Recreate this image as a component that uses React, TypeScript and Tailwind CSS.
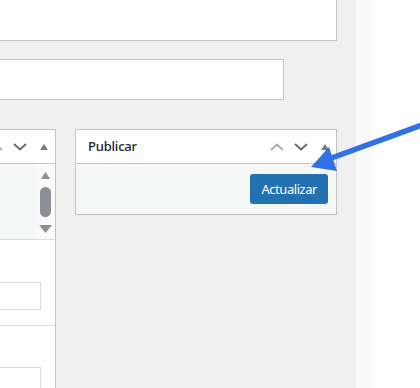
import React from 'react'

const ChevronUp = ({ className }: { className?: string }) => (
  <svg width="14" height="8" viewBox="0 0 14 8" className={className}>
    <polyline points="1,7 7,1.5 13,7" fill="none" stroke="currentColor" strokeWidth="1.8" />
  </svg>
)

const ChevronDown = ({ className }: { className?: string }) => (
  <svg width="14" height="8" viewBox="0 0 14 8" className={className}>
    <polyline points="1,1 7,6.5 13,1" fill="none" stroke="currentColor" strokeWidth="1.8" />
  </svg>
)

const Triangle = ({ className }: { className?: string }) => (
  <svg width="8" height="6" viewBox="0 0 8 6" className={className}>
    <polygon points="4,0 8,6 0,6" fill="currentColor" />
  </svg>
)

// the up / down / toggle buttons on the right of a postbox header
const HandleActions = () => (
  <div className="flex items-center shrink-0 pr-[7px]">
    <ChevronUp className="text-[#a7aaad]" />
    <ChevronDown className="ml-[10px] text-[#646970]" />
    <Triangle className="ml-[13px] text-[#787c82]" />
  </div>
)

export default function App() {
  return (
    <div className="relative w-[420px] h-[388px] overflow-hidden flex font-['Noto_Sans',sans-serif] text-[#1d2327]">
      <div className="w-[356px] shrink-0 bg-[#f0f0f0] flex flex-col">
        {/* editor body */}
        <div className="w-[337px] h-[41px] shrink-0 bg-white border-r border-b border-[#c3c4c7]" />
        {/* permalink input */}
        <div className="mt-[18px] w-[284px] h-[41px] shrink-0 bg-white border-y border-r border-[#c3c4c7]" />

        <div className="mt-[29px] flex items-start gap-[19px] flex-1 min-h-0">
          {/* left postbox, cut off */}
          <div className="w-[56px] h-full shrink-0 overflow-hidden bg-white border-t border-r border-[#c3c4c7] flex flex-col">
            <div className="h-[34px] shrink-0 flex items-center justify-end border-b border-[#c3c4c7]">
              <HandleActions />
            </div>
            <div className="h-[76px] shrink-0 flex border-b border-[#dcdcde] bg-[#f6f7f7]">
              <div className="flex-1" />
              <div className="w-[19px] bg-[#fafafa] flex flex-col items-center pt-[8px]">
                <Triangle className="w-[13px] h-[7px] text-[#8c8f94]" />
                <div className="mt-[8px] w-[11px] h-[30px] rounded-full bg-[#8c8f94]" />
                <svg width="13" height="8" viewBox="0 0 13 8" className="mt-[8px] text-[#8c8f94]">
                  <polygon points="0,0 13,0 6.5,8" fill="currentColor" />
                </svg>
              </div>
            </div>
            <div className="h-[86px] shrink-0 border-b border-[#dcdcde] pt-[42px]">
              <div className="w-[41px] h-[28px] border-y border-r border-[#dcdcde]" />
            </div>
            <div className="shrink-0 pt-[41px]">
              <div className="w-[41px] h-[28px] border-y border-r border-[#dcdcde]" />
            </div>
          </div>

          {/* Publicar postbox */}
          <div className="w-[262px] shrink-0 bg-white border border-[#c3c4c7]">
            <div className="h-[34px] flex items-center border-b border-[#c3c4c7] pl-[12px]">
              <h2 className="text-[13px] font-medium tracking-[-0.2px] leading-none m-0">Publicar</h2>
              <div className="ml-auto">
                <HandleActions />
              </div>
            </div>
            <div className="h-[50px] bg-[#f6f7f7] flex items-center justify-end pr-[8px]">
              <button className="h-[30px] px-[11px] rounded-[3px] bg-[#2271b1] text-white text-[13px] tracking-[-0.45px] leading-none">
                Actualizar
              </button>
            </div>
          </div>
        </div>
      </div>
      <div className="w-[17px] shrink-0 bg-[#fafafa]" />
      <div className="flex-1 bg-white" />

      {/* annotation arrow */}
      <svg className="absolute inset-0 pointer-events-none" width="420" height="388" viewBox="0 0 420 388">
        <line x1="422" y1="125" x2="326" y2="160" stroke="#3072e6" strokeWidth="5.5" />
        <polygon points="311,167 329,147 337,171" fill="#3072e6" />
      </svg>
    </div>
  )
}
